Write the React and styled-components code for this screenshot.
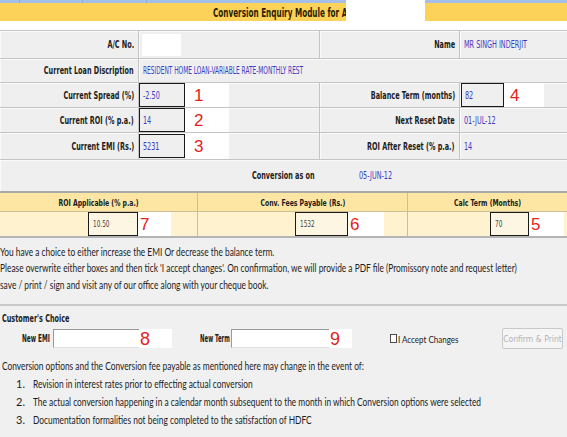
import React from 'react';
import styled, { createGlobalStyle } from 'styled-components';

const Global = createGlobalStyle`
  html, body { margin: 0; padding: 0; background: #f0f0f0; }
  body { font-family: "DejaVu Sans Condensed", "DejaVu Sans", sans-serif; font-stretch: condensed; }
  * { box-sizing: border-box; }
`;

const Sq = styled.span`
  display: inline-block;
  flex-shrink: 0;
  white-space: nowrap;
  transform: scaleX(${p => p.$x ?? 0.72});
  transform-origin: ${p => p.$o ?? 'left'} center;
`;

const Page = styled.div`
  position: relative;
  width: 567px;
  height: 437px;
  overflow: hidden;
  background: #f0f0f0;
`;

const TopStrip = styled.div`
  display: flex;
  height: 3px;
  background: #a6bfe8;
`;

const StripTab = styled.span`
  width: ${p => p.$w}px;
  border-right: 1px solid #8fa8d4;
`;

const TitleBar = styled.div`
  display: flex;
  align-items: center;
  height: 18px;
  padding-left: 213px;
  background: #fdd258;
`;

const Title = styled(Sq)`
  font-weight: bold;
  font-size: 13px;
  color: #2b2100;
`;

const Redact = styled.div`
  position: absolute;
  left: 346px;
  top: 0;
  width: 79px;
  height: 21px;
  background: #fff;
`;

const WhiteGap = styled.div`
  height: 9px;
  background: #fff;
`;

const InfoGrid = styled.div`
  display: grid;
  grid-template-columns: 138px 180px 139px 1fr;
  grid-template-rows: 27px 23px 24px 24px 26px 31px;
  gap: 1px;
  background: #c4c4c4;
  border-top: 1px solid #c4c4c4;
`;

const Cell = styled.div`
  display: flex;
  align-items: center;
  justify-content: ${p => (p.$right ? 'flex-end' : 'flex-start')};
  padding: ${p => (p.$right ? '0 4px 0 0' : `0 0 0 ${p.$pl ?? 3}px`)};
  grid-column: ${p => p.$span || 'auto'};
  background: #efefef;
  box-shadow: inset 1px 1px 0 #fafafa;
`;

const Label = styled(Sq).attrs(p => ({ $o: p.$o ?? 'right' }))`
  font-weight: bold;
  font-size: 10px;
  color: #1c1c1c;
`;

const Value = styled(Sq)`
  font-size: 10px;
  color: #3b3bc4;
`;

const AcBox = styled.div`
  width: 39px;
  height: 22px;
  background: #fff;
`;

const FieldBox = styled.div`
  display: flex;
  align-items: center;
  width: ${p => p.$w}px;
  height: ${p => p.$h ?? 24}px;
  padding-left: 3px;
  border: 1px solid #1a1a1a;
  background: transparent;
`;

const Marker = styled.div`
  display: flex;
  align-items: center;
  align-self: stretch;
  width: ${p => p.$w}px;
  padding-left: ${p => p.$pad ?? 8}px;
  background: #fff;
  color: #e2231a;
  font-family: "Liberation Sans", Arial, sans-serif;
  font-size: 17px;
  line-height: 1;
`;

const AsOn = styled.div`
  display: flex;
  align-items: center;
  gap: 20px;
`;

const FeeGrid = styled.div`
  display: grid;
  grid-template-columns: 197px 209px 1fr;
  grid-template-rows: 18px 24px;
  gap: 1px;
  background: #cdbf95;
  border-top: 2px solid #a9a9a9;
  border-bottom: 2px solid #b4b4b4;
`;

const FeeHead = styled.div`
  display: flex;
  align-items: center;
  justify-content: center;
  background: #fde6a4;
`;

const FeeCell = styled.div`
  display: flex;
  align-items: center;
  padding-left: ${p => p.$pl}px;
  background: #fef2cf;
`;

const FeeBox = styled(FieldBox)`
  background: #fdf6e2;
  padding-left: 4px;
`;

const SmallVal = styled(Sq)`
  font-family: "DejaVu Sans", sans-serif;
  font-size: 8px;
  color: #444;
`;

const HeadText = styled(Sq).attrs({ $o: 'center' })`
  font-weight: bold;
  font-size: 9.5px;
  color: #1c1c1c;
`;

const Notice = styled.div`
  padding: 5px 0 11px 0;
  border-bottom: 2px solid #c8c8c8;
  background: #f0f0f0;
`;

const TextLine = styled.div`
  display: flex;
  align-items: center;
  height: 16.5px;
  padding-left: ${p => p.$pl ?? 0}px;
`;

const Body = styled(Sq)`
  font-family: Lato, "Open Sans", sans-serif;
  font-size: 11px;
  color: #1d1d1d;
`;

const Choice = styled.div`
  padding: 6px 0 0 0;
`;

const ChoiceTitle = styled.div`
  display: flex;
  align-items: center;
  height: 14px;
  padding-left: 2px;
`;

const ChoiceRow = styled.div`
  display: flex;
  align-items: center;
  height: 20px;
  margin-top: 3px;
  padding-left: 22px;
  padding-right: 4px;
`;

const ChoiceLabel = styled.div`
  display: flex;
  align-items: center;
  width: ${p => p.$w}px;
  flex-shrink: 0;
`;

const EntryInput = styled.div`
  flex-shrink: 0;
  width: ${p => p.$w}px;
  height: 19px;
  background: #fff;
  border-top: 1px solid #9a9a9a;
  border-left: 1px solid #9a9a9a;
  border-bottom: 1px solid #e2e2e2;
`;

const EntryMarker = styled(Marker)`
  flex-shrink: 0;
  height: 19px;
  align-self: auto;
  font-size: 18px;
  padding-left: 1px;
  margin-right: ${p => p.$mr}px;
`;

const Check = styled.span`
  flex-shrink: 0;
  width: 7px;
  height: 9px;
  border: 1px solid #4a4a4a;
  background: #fff;
  margin-right: 1px;
`;

const CheckText = styled(Sq)`
  font-family: Lato, "Open Sans", sans-serif;
  font-size: 10px;
  color: #222;
`;

const ConfirmButton = styled.button`
  margin-left: auto;
  width: 61px;
  height: 21px;
  padding: 0;
  border: 1px solid #c9c9c9;
  border-radius: 2px;
  background: #f5f5f5;
  color: #b3b3b3;
  font-family: "DejaVu Sans", sans-serif;
  font-size: 9px;
  display: flex;
  align-items: center;
  justify-content: center;
`;

const Conditions = styled.div`
  padding-top: 9px;
  border-bottom: 2px solid #c8c8c8;
  height: 131px;
`;

const ListItem = styled.div`
  display: flex;
  align-items: center;
  height: 18px;
  padding-left: 16px;
`;

const Num = styled.span`
  flex-shrink: 0;
  width: 17px;
  font-family: Lato, "Open Sans", sans-serif;
  font-size: 11px;
  color: #1d1d1d;
`;

const infoRows = [
  { label: 'Current Spread (%)', val: '-2.50', mark: '1', rlabel: 'Balance Term (months)', rval: '82', rmark: '4', box: true },
  { label: 'Current ROI (% p.a.)', val: '14', mark: '2', rlabel: 'Next Reset Date', rval: '01-JUL-12' },
  { label: 'Current EMI (Rs.)', val: '5231', mark: '3', rlabel: 'ROI After Reset (% p.a.)', rval: '14' },
];

const fees = [
  { head: 'ROI Applicable (% p.a.)', val: '10.50', mark: '7', pl: 88, w: 50, mw: 33 },
  { head: 'Conv. Fees Payable (Rs.)', val: '1532', mark: '6', pl: 97, w: 53, mw: 36 },
  { head: 'Calc Term (Months)', val: '70', mark: '5', pl: 82, w: 39, mw: 35 },
];

const conditions = [
  'Revision in interest rates prior to effecting actual conversion',
  'The actual conversion happening in a calendar month subsequent to the month in which Conversion options were selected',
  'Documentation formalities not being completed to the satisfaction of HDFC',
];

export default function App() {
  return (
    <>
      <Global />
      <Page>
        <TopStrip>
          <StripTab $w={20} />
          <StripTab $w={63} />
          <StripTab $w={64} />
        </TopStrip>
        <TitleBar>
          <Title $x={0.62}>Conversion Enquiry Module for A</Title>
        </TitleBar>
        <Redact />
        <WhiteGap />

        <InfoGrid>
          <Cell $right><Label>A/C No.</Label></Cell>
          <Cell $pl={3}><AcBox /></Cell>
          <Cell $right><Label>Name</Label></Cell>
          <Cell $pl={4}><Value>MR SINGH INDERJIT</Value></Cell>

          <Cell $right><Label>Current Loan Discription</Label></Cell>
          <Cell $span="span 3" $pl={4}><Value $x={0.65}>RESIDENT HOME LOAN-VARIABLE RATE-MONTHLY REST</Value></Cell>

          {infoRows.map(r => (
            <React.Fragment key={r.label}>
              <Cell $right><Label>{r.label}</Label></Cell>
              <Cell $pl={0}>
                <FieldBox $w={46}><Value>{r.val}</Value></FieldBox>
                <Marker $w={44} $pad={9}>{r.mark}</Marker>
              </Cell>
              <Cell $right><Label>{r.rlabel}</Label></Cell>
              <Cell $pl={r.box ? 1 : 4}>
                {r.box ? (
                  <>
                    <FieldBox $w={43}><Value>{r.rval}</Value></FieldBox>
                    <Marker $w={40} $pad={6}>{r.rmark}</Marker>
                  </>
                ) : (
                  <Value>{r.rval}</Value>
                )}
              </Cell>
            </React.Fragment>
          ))}

          <Cell $span="span 4" $pl={252}>
            <AsOn>
              <Label $o="left">Conversion as on</Label>
              <Value>05-JUN-12</Value>
            </AsOn>
          </Cell>
        </InfoGrid>

        <FeeGrid>
          {fees.map(f => (
            <FeeHead key={f.head}><HeadText>{f.head}</HeadText></FeeHead>
          ))}
          {fees.map(f => (
            <FeeCell key={f.val} $pl={f.pl}>
              <FeeBox $w={f.w} $h={24}><SmallVal $x={0.8}>{f.val}</SmallVal></FeeBox>
              <Marker $w={f.mw} $pad={2}>{f.mark}</Marker>
            </FeeCell>
          ))}
        </FeeGrid>

        <Notice>
          <TextLine><Body $x={0.76}>You have a choice to either increase the EMI Or decrease the balance term.</Body></TextLine>
          <TextLine><Body $x={0.76}>Please overwrite either boxes and then tick 'I accept changes'. On confirmation, we will provide a PDF file (Promissory note and request letter)</Body></TextLine>
          <TextLine><Body $x={0.76}>save / print / sign and visit any of our office along with your cheque book.</Body></TextLine>
        </Notice>

        <Choice>
          <ChoiceTitle><Label $o="left">Customer's Choice</Label></ChoiceTitle>
          <ChoiceRow>
            <ChoiceLabel $w={31}><Label $o="left" $x={0.64}>New EMI</Label></ChoiceLabel>
            <EntryInput $w={86} />
            <EntryMarker $w={33} $mr={28}>8</EntryMarker>
            <ChoiceLabel $w={31}><Label $o="left" $x={0.6}>New Term</Label></ChoiceLabel>
            <EntryInput $w={98} />
            <EntryMarker $w={23} $mr={38}>9</EntryMarker>
            <Check />
            <CheckText $x={0.8}>I Accept Changes</CheckText>
            <ConfirmButton type="button" disabled>
              <Sq $x={0.85} $o="center">Confirm &amp; Print</Sq>
            </ConfirmButton>
          </ChoiceRow>
        </Choice>

        <Conditions>
          <TextLine $pl={2}><Body $x={0.76}>Conversion options and the Conversion fee payable as mentioned here may change in the event of:</Body></TextLine>
          {conditions.map((c, i) => (
            <ListItem key={i}>
              <Num>{i + 1}.</Num>
              <Body $x={0.76}>{c}</Body>
            </ListItem>
          ))}
        </Conditions>
      </Page>
    </>
  );
}
